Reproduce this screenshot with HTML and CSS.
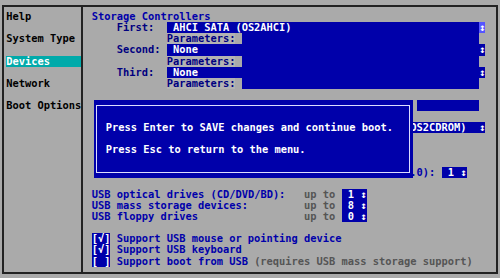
FILE: index.html
```html
<html>
  <head>
    <meta charset="utf-8">
    <title>Boot Configuration</title>
    <link rel="stylesheet" href="styles.css">
  </head>
  <body>
    <div class="screen">
      <div class="frame">
        <div class="menu">
          <div class="item">Help</div>
          <div class="item">System Type</div>
          <div class="item active">Devices</div>
          <div class="item">Network</div>
          <div class="item">Boot Options</div>
        </div>
        <div class="main">
          <div class="row">Storage Controllers</div>
          <div class="row"><span class="label">First:</span><span class="select">AHCI SATA (OS2AHCI)</span><span class="arrow focus">↕</span></div>
          <div class="row"><span class="label"></span><span class="param-label">Parameters:</span><span class="param"></span></div>
          <div class="row"><span class="label">Second:</span><span class="select">None</span><span class="arrow">↕</span></div>
          <div class="row"><span class="label"></span><span class="param-label">Parameters:</span><span class="param"></span></div>
          <div class="row"><span class="label">Third:</span><span class="select">None</span><span class="arrow">↕</span></div>
          <div class="row"><span class="label"></span><span class="param-label">Parameters:</span><span class="param"></span></div>
          <div class="row"></div>
          <!-- rows 9..15 are mostly hidden behind the dialog -->
          <div class="row"><span class="covered"></span><span class="gap"></span><span class="field"></span></div>
          <div class="row"></div>
          <div class="row"><span class="covered"></span><span class="select-tail">OS2CDROM)</span><span class="arrow">↕</span></div>
          <div class="row"></div>
          <div class="row"></div>
          <div class="row"></div>
          <div class="row"><span class="covered"></span>.0): <span class="num"> 1 ↕</span></div>
          <div class="row"></div>
          <div class="row"><span class="usb-label">USB optical drives (CD/DVD/BD):</span><span class="dim">up to</span><span class="num"> 1 ↕</span></div>
          <div class="row"><span class="usb-label">USB mass storage devices:</span><span class="dim">up to</span><span class="num"> 8 ↕</span></div>
          <div class="row"><span class="usb-label">USB floppy drives</span><span class="dim">up to</span><span class="num"> 0 ↕</span></div>
          <div class="row"></div>
          <div class="row"><span class="check">[√]</span>Support USB mouse or pointing device</div>
          <div class="row"><span class="check">[√]</span>Support USB keyboard</div>
          <div class="row"><span class="check">[ ]</span>Support boot from USB <span class="dim">(requires USB mass storage support)</span></div>
        </div>
      </div>
      <div class="dialog">
        <div class="dialog-box">
          <p>Press Enter to SAVE changes and continue boot.</p>
          <p>Press Esc to return to the menu.</p>
        </div>
      </div>
    </div>
  </body>
</html>
```

FILE: styles.css
```css
/* text mode screen: 80 x 25 cells of 6.25 x 11.11 px */
body {
  margin: 0;
  background: #aaa;
  color: #0000aa;
  font: bold 10.38px/11.11px "DejaVu Sans Mono", monospace;
}

.screen {
  position: relative;
  width: 500px;
  height: 278px;
  overflow: hidden;
}

.frame {
  display: flex;
  height: 269px;
  margin: 4.5px 2px 0 2px;
  border: 2px solid #222;
  box-sizing: border-box;
}

.menu {
  display: flex;
  flex-direction: column;
  gap: 11.11px;
  width: 79.4px;
  padding: 4.61px 0 0 2.25px;
  border-right: 2px solid #222;
  box-sizing: border-box;
  color: #000;
}
.menu .item {
  width: 12ch;
  height: 11.11px;
  white-space: nowrap;
}
.menu .active {
  background: #00aaaa;
  color: #fff;
}

.main {
  flex: 1;
  padding: 4.61px 0 0 8.35px;
}

.row {
  display: flex;
  height: 11.11px;
  white-space: pre;
}

.label {
  width: 12ch;
  padding-left: 4ch;
  box-sizing: border-box;
  color: #000080;
}
.covered {
  width: 51ch;
}
.gap {
  width: 1ch;
}
.usb-label {
  width: 34ch;
}

.select {
  width: 50ch;
  padding-left: 1ch;
  box-sizing: border-box;
  background: #0000aa;
  color: #fff;
}
.select-tail {
  width: 11ch;
  background: #0000aa;
  color: #fff;
}
.arrow {
  width: 1ch;
  background: #0000aa;
  color: #fff;
}
.arrow.focus {
  background: #5555ff;
}

.param-label {
  width: 11ch;
  margin-right: 1ch;
  background: #b3b3b3;
  color: #000080;
}
.param {
  width: 38ch;
  background: #0000aa;
}
.field {
  width: 10ch;
  background: #0000aa;
}

.num {
  width: 4ch;
  background: #0000aa;
  color: #fff;
}
.dim {
  color: #555;
}
.row .dim + .num {
  margin-left: 1ch;
}

.check {
  width: 3ch;
  margin-right: 1ch;
  background: #0000aa;
  color: #fff;
}

.dialog {
  position: absolute;
  left: 93.75px;
  top: 100px;
  width: 318.75px;
  height: 77.8px;
  padding: 4.8px 2.4px;
  box-sizing: border-box;
  background: #0000aa;
  color: #fff;
}
.dialog-box {
  height: 100%;
  padding: 15.9px 0 0 8.6px;
  border: 1.5px solid #dcdcff;
  box-sizing: border-box;
  white-space: nowrap;
}
.dialog-box p {
  margin: 0 0 11.11px 0;
}
```
